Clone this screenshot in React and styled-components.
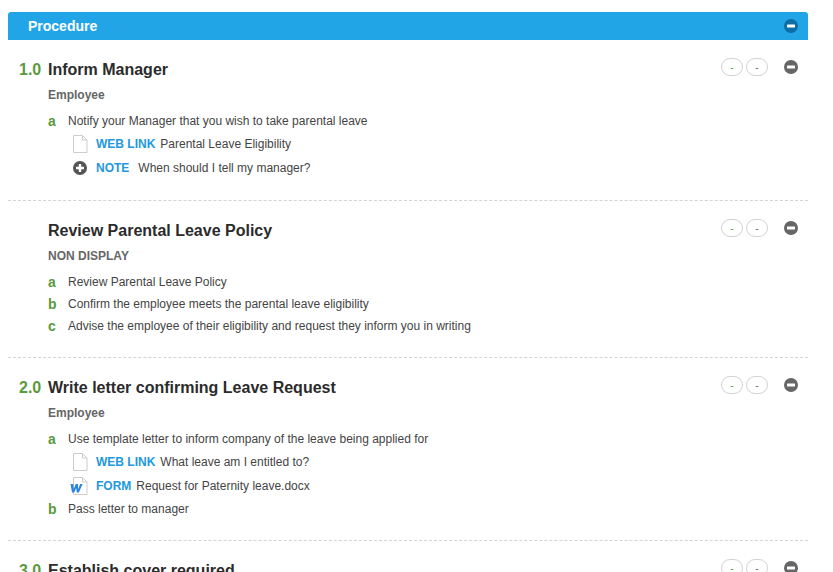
import React from "react"
import styled, { createGlobalStyle } from "styled-components"

const sections = [
  {
    number: "1.0",
    title: "Inform Manager",
    role: "Employee",
    items: [
      {
        letter: "a",
        text: "Notify your Manager that you wish to take parental leave",
        attachments: [
          { icon: "doc", kind: "WEB LINK", text: "Parental Leave Eligibility", gap: 5 },
          { icon: "plus", kind: "NOTE", text: "When should I tell my manager?", gap: 9 },
        ],
      },
    ],
  },
  {
    title: "Review Parental Leave Policy",
    role: "NON DISPLAY",
    items: [
      { letter: "a", text: "Review Parental Leave Policy" },
      { letter: "b", text: "Confirm the employee meets the parental leave eligibility" },
      { letter: "c", text: "Advise the employee of their eligibility and request they inform you in writing" },
    ],
  },
  {
    number: "2.0",
    title: "Write letter confirming Leave Request",
    role: "Employee",
    items: [
      {
        letter: "a",
        text: "Use template letter to inform company of the leave being applied for",
        attachments: [
          { icon: "doc", kind: "WEB LINK", text: "What leave am I entitled to?", gap: 5 },
          { icon: "word", kind: "FORM", text: "Request for Paternity leave.docx", gap: 5 },
        ],
      },
      { letter: "b", text: "Pass letter to manager" },
    ],
  },
  {
    number: "3.0",
    title: "Establish cover required",
    role: "Employee",
    items: [],
  },
]

const MinusIcon = ({ color }) => (
  <svg width="14" height="14" viewBox="0 0 14 14">
    <circle cx="7" cy="7" r="7" fill={color} />
    <rect x="3" y="5.5" width="8" height="3" rx="0.6" fill="#fff" />
  </svg>
)

const DocIcon = () => (
  <svg width="16" height="18" viewBox="0 0 16 18">
    <path d="M1.5 .5H10.5L15 5V17.5H1.5Z" fill="#fff" stroke="#ccc" />
    <path d="M10.5 .5V5H15" fill="none" stroke="#ccc" />
  </svg>
)

const PlusIcon = () => (
  <svg width="16" height="14" viewBox="0 0 16 14">
    <circle cx="8" cy="7" r="7" fill="#555" />
    <path d="M8 3V11M4 7H12" stroke="#fff" strokeWidth="2.4" />
  </svg>
)

const WordIcon = () => (
  <svg width="18" height="18" viewBox="0 0 18 18">
    <path d="M3.5 .5H12.5L17 5V17.5H3.5Z" fill="#fff" stroke="#ccc" />
    <path d="M12.5 .5V5H17" fill="none" stroke="#ccc" />
    <path
      d="M.5 7H3.2L3.7 12L5.8 7H7.9L8.2 12L10.2 7H12.6L8.9 15.5H6.7L6.2 11L4.2 15.5H2Z"
      fill="#2a86de"
    />
  </svg>
)

const attachmentIcons = {
  doc: <DocIcon />,
  plus: <PlusIcon />,
  word: <WordIcon />,
}

const App = () => {
  return (
    <Page>
      <GlobalStyle />
      <Panel>
        <Banner>
          <BannerTitle>Procedure</BannerTitle>
          <MinusIcon color="#0d6ea6" />
        </Banner>
        {sections.map(section => (
          <Section key={section.title}>
            <SectionHead>
              <Number>{section.number}</Number>
              <Title>{section.title}</Title>
              <Controls>
                <Pill $dash="#5a9a3c">-</Pill>
                <Pill $dash="#666">-</Pill>
                <CollapseSlot>
                  <MinusIcon color="#666" />
                </CollapseSlot>
              </Controls>
            </SectionHead>
            <Role>{section.role}</Role>
            <Items>
              {section.items.map(item => (
                <Item key={item.letter}>
                  <ItemRow>
                    <Letter>{item.letter}</Letter>
                    <span>{item.text}</span>
                  </ItemRow>
                  {item.attachments &&
                    item.attachments.map(att => (
                      <Attachment key={att.text}>
                        <IconSlot>{attachmentIcons[att.icon]}</IconSlot>
                        <Kind $gap={att.gap}>{att.kind}</Kind>
                        <span>{att.text}</span>
                      </Attachment>
                    ))}
                </Item>
              ))}
            </Items>
          </Section>
        ))}
      </Panel>
    </Page>
  )
}

export default App

const GlobalStyle = createGlobalStyle`
  html, body {
    margin: 0;
    padding: 0;
    background: #fff;
  }
`

const Page = styled.div`
  height: 100vh;
  overflow: hidden;
  padding: 12px 0 0 8px;
  box-sizing: border-box;
  font-family: "Liberation Sans", Arial, sans-serif;
  font-size: 12px;
  color: #444;
`

const Panel = styled.div`
  width: 800px;
`

const Banner = styled.div`
  height: 28px;
  display: flex;
  align-items: center;
  justify-content: space-between;
  padding: 0 10px 0 20px;
  background-color: #22a5e7;
  border-radius: 3px 3px 0 0;
`

const BannerTitle = styled.div`
  font-size: 14px;
  font-weight: 700;
  color: #fff;
`

const Section = styled.section`
  padding: 20px 0;
  border-bottom: 1px dashed #d4d4d4;
`

const SectionHead = styled.div`
  height: 20px;
  display: flex;
  align-items: center;
`

const Number = styled.div`
  width: 40px;
  box-sizing: border-box;
  padding-left: 11px;
  font-size: 16px;
  font-weight: 700;
  color: #5a9a3c;
`

const Title = styled.h2`
  flex: 1;
  margin: 0;
  font-size: 16px;
  font-weight: 700;
  color: #2b2b2b;
`

const Controls = styled.div`
  display: flex;
  align-items: center;
  gap: 3px;
  margin-top: -6px;
`

const Pill = styled.div`
  width: 22px;
  height: 18px;
  box-sizing: border-box;
  display: flex;
  align-items: center;
  justify-content: center;
  border: 1px solid #d2d2d2;
  border-radius: 9px;
  font-size: 10px;
  color: ${props => props.$dash};
`

const CollapseSlot = styled.div`
  display: flex;
  margin: 0 10px 0 13px;
`

const Role = styled.div`
  margin: 8px 0 0 40px;
  height: 14px;
  line-height: 14px;
  font-weight: 700;
  color: #666;
`

const Items = styled.div`
  margin: 8px 0 0 40px;
`

const Item = styled.div``

const ItemRow = styled.div`
  height: 22px;
  display: flex;
  align-items: center;
`

const Letter = styled.span`
  width: 20px;
  font-size: 14px;
  font-weight: 700;
  color: #5a9a3c;
`

const Attachment = styled.div`
  height: 24px;
  display: flex;
  align-items: center;
  padding-left: 23px;
`

const IconSlot = styled.div`
  width: 25px;
  display: flex;
  justify-content: flex-end;
  padding-right: 8px;
  box-sizing: border-box;

  svg {
    flex-shrink: 0;
  }
`

const Kind = styled.span`
  font-weight: 700;
  color: #2299dd;
  margin-right: ${props => props.$gap}px;
`
